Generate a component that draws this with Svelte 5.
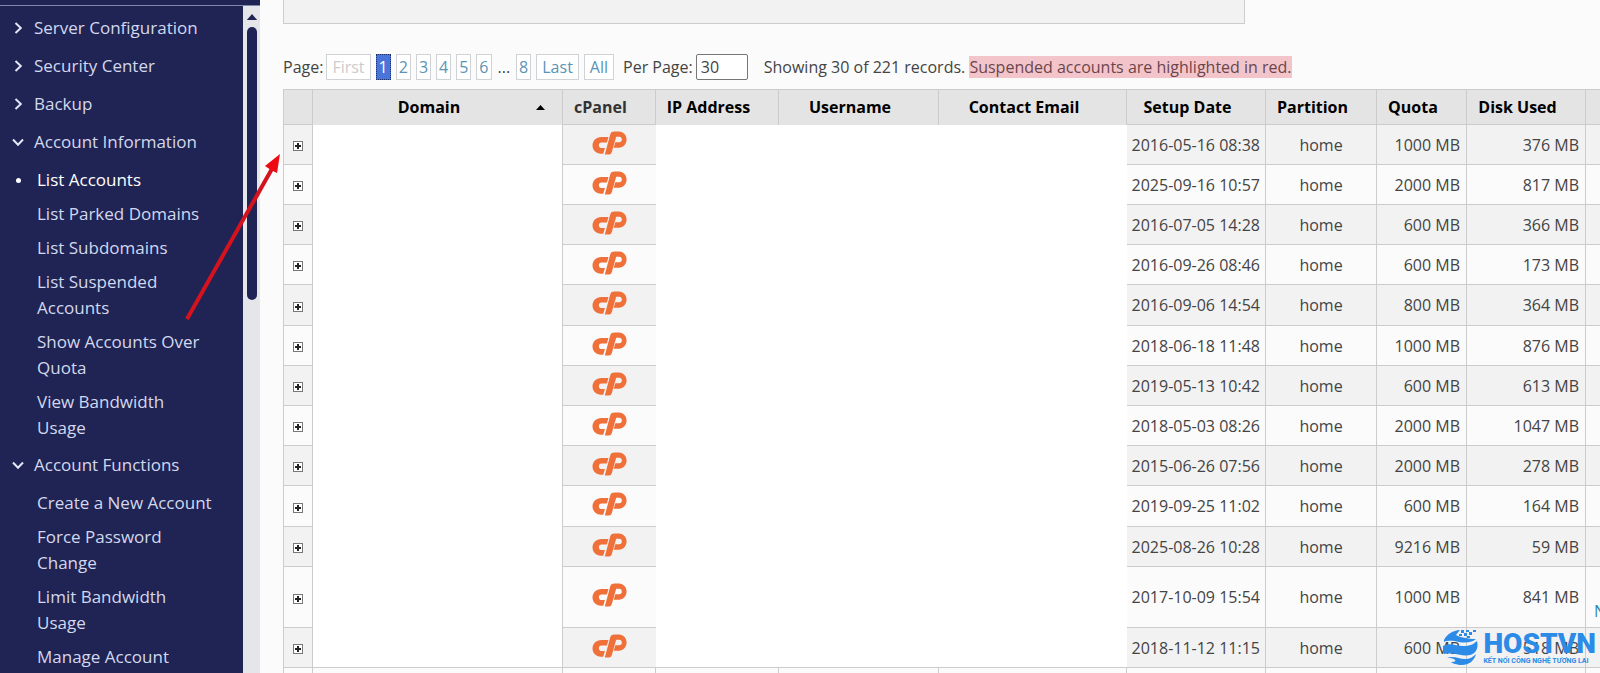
<script>
	const menu = [
		{ title: 'Server Configuration', items: [] },
		{ title: 'Security Center', items: [] },
		{ title: 'Backup', items: [] },
		{
			title: 'Account Information',
			items: [
				'List Accounts',
				'List Parked Domains',
				'List Subdomains',
				'List Suspended Accounts',
				'Show Accounts Over Quota',
				'View Bandwidth Usage'
			]
		},
		{
			title: 'Account Functions',
			items: [
				'Create a New Account',
				'Force Password Change',
				'Limit Bandwidth Usage',
				'Manage Account'
			]
		}
	];

	const activeItem = 'List Accounts';

	const pages = ['2', '3', '4', '5', '6'];
	let perPage = '30';

	const accounts = [
		{ setup: '2016-05-16 08:38', quota: '1000 MB', used: '376 MB' },
		{ setup: '2025-09-16 10:57', quota: '2000 MB', used: '817 MB' },
		{ setup: '2016-07-05 14:28', quota: '600 MB', used: '366 MB' },
		{ setup: '2016-09-26 08:46', quota: '600 MB', used: '173 MB' },
		{ setup: '2016-09-06 14:54', quota: '800 MB', used: '364 MB' },
		{ setup: '2018-06-18 11:48', quota: '1000 MB', used: '876 MB' },
		{ setup: '2019-05-13 10:42', quota: '600 MB', used: '613 MB' },
		{ setup: '2018-05-03 08:26', quota: '2000 MB', used: '1047 MB' },
		{ setup: '2015-06-26 07:56', quota: '2000 MB', used: '278 MB' },
		{ setup: '2019-09-25 11:02', quota: '600 MB', used: '164 MB' },
		{ setup: '2025-08-26 10:28', quota: '9216 MB', used: '59 MB' },
		{ setup: '2017-10-09 15:54', quota: '1000 MB', used: '841 MB', tall: true, note: 'N' },
		{ setup: '2018-11-12 11:15', quota: '600 MB', used: '518 MB' }
	];
</script>

<div class="shell">
	<aside>
		<div class="topline"></div>
		<div class="side">
			<nav>
				{#each menu as group}
					<section>
						<button class="group">
							<svg class="chevron" class:open={group.items.length} viewBox="0 0 14 14">
								<path d="M4.5 2 9.8 7 4.5 12" />
							</svg>
							{group.title}
						</button>
						{#if group.items.length}
							<ul>
								{#each group.items as item}
									<li class:active={item === activeItem}><a href="#top">{item}</a></li>
								{/each}
							</ul>
						{/if}
					</section>
				{/each}
			</nav>
			<div class="scrollbar">
				<svg viewBox="0 0 12 7"><path d="M0 7 6 0l6 7z" /></svg>
				<div class="thumb"></div>
			</div>
		</div>
	</aside>

	<main>
		<div class="panel"></div>

		<div class="pager">
			<div class="field">
				<span>Page:</span>
				<button class="wide" disabled>First</button>
			</div>
			<button class="current">1</button>
			{#each pages as page}
				<button>{page}</button>
			{/each}
			<span class="dots">...</span>
			<button>8</button>
			<button class="wide">Last</button>
			<button class="wide">All</button>
			<div class="field per-page">
				<label for="per-page">Per Page:</label>
				<input id="per-page" type="text" bind:value={perPage} />
			</div>
			<p>Showing 30 of 221 records. <mark>Suspended accounts are highlighted in red.</mark></p>
		</div>

		<table>
			<colgroup>
				<col class="c-expand" />
				<col class="c-domain" />
				<col class="c-cpanel" />
				<col class="c-ip" />
				<col class="c-user" />
				<col class="c-email" />
				<col class="c-setup" />
				<col class="c-partition" />
				<col class="c-quota" />
				<col class="c-used" />
				<col class="c-more" />
			</colgroup>
			<thead>
				<tr>
					<th></th>
					<th>
						<button class="sort">
							<span>Domain</span>
							<svg viewBox="0 0 9 5"><path d="M0 5 4.5 0 9 5z" /></svg>
						</button>
					</th>
					<th class="plain">cPanel</th>
					<th>IP Address</th>
					<th>Username</th>
					<th>Contact Email</th>
					<th>Setup Date</th>
					<th>Partition</th>
					<th>Quota</th>
					<th>Disk Used</th>
					<th></th>
				</tr>
			</thead>
			<tbody>
				{#each accounts as account}
					<tr class:tall={account.tall}>
						<td class="expand">
							<button aria-label="Expand">
								<svg viewBox="0 0 10 10">
									<rect x="0.5" y="0.5" width="9" height="9" />
									<path d="M2 5h6M5 2v6" />
								</svg>
							</button>
						</td>
						<td class="blank domain"></td>
						<td class="cpanel">
							<a href="#cpanel" aria-label="cPanel">
								<svg viewBox="0 0 35 24">
									<path
										d="M16.5 6H9.5C4 6 .5 10 .5 14.4S4 22.7 9 22.7h2.3l1.6-5.600H9.700a2.800 2.800 0 0 1 0-5.600h5.200z"
									/>
									<path
										d="M12.8 23.5 18.2 3.4C18.9 1.2 20.4.5 22.5.5H27c4.5 0 7.6 3.7 7.6 8s-3.2 8.3-7.6 8.3h-5.3l1.6-5.600h3.800a2.700 2.700 0 0 0 0-5.400h-2.900l-4.500 15.700a2.800 2.800 0 0 1-2.700 2z"
									/>
								</svg>
							</a>
						</td>
						<td class="blank"></td>
						<td class="blank"></td>
						<td class="blank"></td>
						<td class="setup">{account.setup}</td>
						<td>home</td>
						<td class="size">{account.quota}</td>
						<td class="size">{account.used}</td>
						<td class="more">{#if account.note}<a href="#note">{account.note}</a>{/if}</td>
					</tr>
				{/each}
				<tr>
					{#each Array(11) as _}
						<td></td>
					{/each}
				</tr>
			</tbody>
		</table>
	</main>

	<svg class="pointer" viewBox="0 0 98 170">
		<path class="shaft" d="M4 166 90 14" />
		<path class="head" d="M97 1 94 20 88 17 82 13z" />
	</svg>

	<div class="brand">
		<svg viewBox="0 0 36 37">
			<path d="M1 11C4 5 10 1.500 17 1l-4 5c3 2 12 4 20 4-5 4-11 4-17 3C11 12 5 11 1 13z" />
			<path d="M0 17c7-4 13 0 20 0 7 0 11-2 14-5 2 8-2 13-7 14-7 2-15-3-26-1-1-3-2-5-1-8z" />
			<path d="M4 29c6-3 12 1 18 1 5 0 8-2 11-5-2 7-7 11-14 11-5 0-10-2-11-3 4 0 5-1 4-2-2-2-5-2-8-2z" />
			<path d="M18 1h3v3h-3zM23 1h3v2h-3zM21 4h3v3h-3zM26 3h3v3h-3zM30 1h3v2h-3zM16 5h3v2h-3zM24 7h3v2h-3z" />
		</svg>
		<div>
			<strong>HOSTVN</strong>
			<small>KẾT NỐI CÔNG NGHỆ TƯƠNG LAI</small>
		</div>
	</div>
</div>

<style>
	:global(body) {
		margin: 0;
		background: #fbfbfb;
	}

	.shell {
		position: relative;
		display: flex;
		height: 100vh;
		overflow: hidden;
		font: 16px/22px 'Open Sans', 'Noto Sans', sans-serif;
		color: #444;
	}

	button,
	input {
		font: inherit;
		color: inherit;
	}

	a {
		text-decoration: none;
	}

	/* sidebar */
	aside {
		display: flex;
		flex: none;
		flex-direction: column;
		width: 260px;
		background: #1f2454;
	}

	.topline {
		height: 5px;
		border-bottom: 1px solid #8287ab;
	}

	.side {
		display: flex;
		flex: 1;
		min-height: 0;
	}

	nav {
		flex: 1;
		overflow: hidden;
		padding-top: 3px;
		font-size: 17px;
		line-height: 26px;
		color: #d3d8ee;
	}

	.group {
		display: flex;
		align-items: center;
		gap: 9px;
		width: 100%;
		height: 38px;
		padding: 0 0 0 11px;
		border: 0;
		background: none;
		white-space: nowrap;
	}

	.chevron {
		width: 14px;
		height: 14px;
		fill: none;
		stroke: #e2e6f6;
		stroke-width: 2;
	}

	.chevron.open {
		transform: rotate(90deg);
	}

	ul {
		display: flex;
		flex-direction: column;
		gap: 8px;
		margin: 0;
		padding: 6px 30px 5px 37px;
		list-style: none;
	}

	li a {
		color: inherit;
	}

	li.active {
		display: flex;
		align-items: center;
		gap: 16px;
		margin-left: -21px;
		color: #fff;
	}

	li.active::before {
		content: '';
		width: 5px;
		height: 5px;
		border-radius: 50%;
		background: #fff;
	}

	.scrollbar {
		display: flex;
		flex-direction: column;
		align-items: center;
		gap: 7px;
		width: 17px;
		padding-top: 8px;
		background: #e4e6ea;
	}

	.scrollbar svg {
		width: 12px;
		height: 6px;
		fill: #1f2454;
	}

	.thumb {
		width: 10px;
		height: 273px;
		border-radius: 5px;
		background: #1f2454;
	}

	/* content */
	main {
		flex: 1;
		min-width: 0;
		overflow: hidden;
		padding-left: 23px;
	}

	.panel {
		box-sizing: border-box;
		max-width: 962px;
		height: 24px;
		border: 1px solid #ccc;
		border-top: 0;
		background: #f2f2f2;
	}

	.pager {
		display: flex;
		align-items: center;
		gap: 5px;
		height: 26px;
		margin: 30px 0 9px;
		white-space: nowrap;
	}

	.field {
		display: flex;
		align-items: center;
		gap: 3px;
	}

	.pager button {
		height: 26px;
		padding: 0 2px;
		border: 1px solid #d0d3d6;
		background: #fff;
		color: #5b93b5;
	}

	.pager .wide {
		padding: 0 5px;
	}

	.pager button:disabled {
		color: #ccc;
	}

	.pager .current {
		border: 1px dotted #1c2f66;
		background: #4a74d9;
		color: #fff;
	}

	.pager .dots {
		padding: 0 1px;
	}

	.pager .per-page {
		margin-left: 4px;
	}

	.pager input {
		box-sizing: border-box;
		width: 52px;
		height: 26px;
		padding: 0 4px;
		border: 1px solid #767676;
		border-radius: 2px;
		background: #fff;
	}

	.pager p {
		margin: 0 0 0 11px;
	}

	mark {
		background: #f3c5cb;
		color: #6b454b;
	}

	table {
		width: 1422px;
		table-layout: fixed;
		border-collapse: collapse;
	}

	.c-expand { width: 29px; }
	.c-domain { width: 250px; }
	.c-cpanel { width: 93px; }
	.c-ip { width: 123px; }
	.c-user { width: 160px; }
	.c-email { width: 188px; }
	.c-setup { width: 139px; }
	.c-partition { width: 111px; }
	.c-quota { width: 90px; }
	.c-used { width: 119px; }
	.c-more { width: 120px; }

	th {
		height: 34px;
		padding: 0 17px 0 0;
		border: 1px solid #ccc;
		background: #e4e4e4;
		color: #000;
		white-space: nowrap;
	}

	th.plain {
		color: #333;
	}

	.sort {
		display: flex;
		align-items: center;
		width: 100%;
		padding: 0 0 0 9px;
		border: 0;
		background: none;
	}

	.sort span {
		flex: 1;
	}

	.sort svg {
		width: 9px;
		height: 5px;
	}

	tbody tr {
		height: 40px;
	}

	tbody tr:nth-child(odd) {
		background: #f2f2f2;
	}

	tbody tr:nth-child(even) {
		background: #fbfbfb;
	}

	tbody tr:nth-child(5n) {
		height: 41px;
	}

	tbody tr.tall {
		height: 61px;
	}

	td {
		padding: 0;
		border: 1px solid #ccc;
		text-align: center;
		white-space: nowrap;
	}

	td.blank {
		border-style: hidden;
		background: #fff;
	}

	td.domain {
		border-style: hidden solid;
	}

	tr:nth-last-child(2) td.blank {
		border-bottom-style: solid;
	}

	.expand button {
		display: block;
		margin: 3px auto 0;
		padding: 0;
		border: 0;
		background: none;
	}

	.expand svg {
		display: block;
		width: 10px;
		height: 10px;
		fill: #fff;
		stroke: #777;
	}

	.expand path {
		stroke: #222;
		stroke-width: 2;
	}

	.cpanel a {
		display: block;
		padding-bottom: 4px;
	}

	.cpanel svg {
		display: block;
		width: 35px;
		height: 24px;
		margin: 0 auto;
		fill: #f0703a;
	}

	td.size {
		padding-right: 6px;
		text-align: right;
	}

	td.more {
		padding: 0 8px 5px;
		text-align: left;
		vertical-align: bottom;
	}

	.more a {
		color: #2a86b0;
	}

	/* overlays */
	.pointer {
		position: absolute;
		top: 153px;
		left: 183px;
		width: 98px;
		height: 170px;
	}

	.shaft {
		stroke: #d5121e;
		stroke-width: 4;
	}

	.head {
		fill: #ee0a12;
	}

	.brand {
		position: absolute;
		right: 4px;
		bottom: 7px;
		display: flex;
		align-items: center;
		gap: 4px;
		color: #2b8be6;
	}

	.brand svg {
		width: 36px;
		height: 37px;
		fill: currentColor;
	}

	.brand strong {
		display: block;
		font-family: Roboto, sans-serif;
		font-size: 28px;
		font-weight: 900;
		line-height: 27px;
	}

	.brand small {
		display: block;
		font-family: Roboto, sans-serif;
		font-size: 7px;
		font-weight: 700;
		line-height: 8px;
	}
</style>
